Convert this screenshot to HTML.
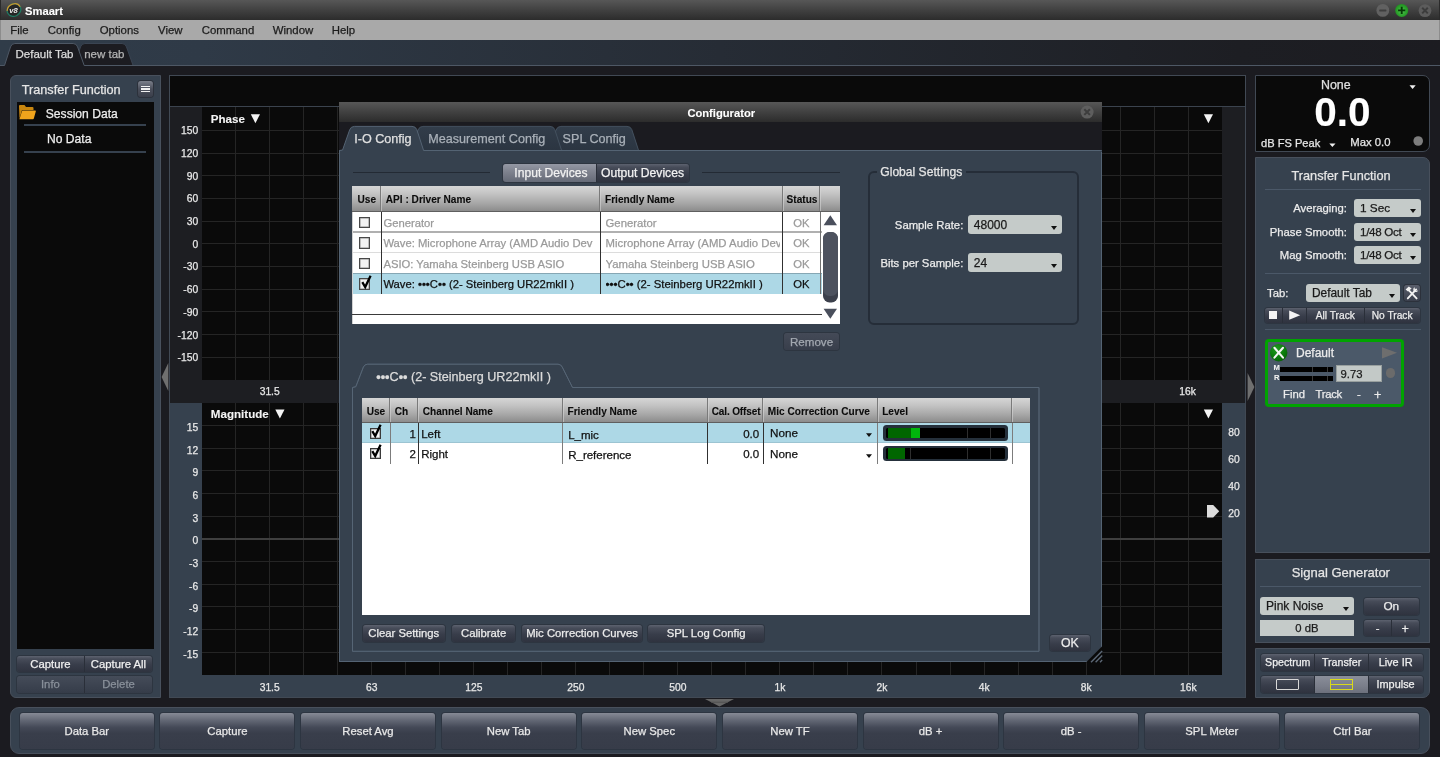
<!DOCTYPE html>
<html lang="en"><head><meta charset="utf-8"><title>Smaart</title>
<style>*{box-sizing:border-box;margin:0;padding:0}
html,body{width:1440px;height:757px;overflow:hidden;background:#1b1b20}
body{position:relative;font-family:"Liberation Sans",sans-serif;font-size:11.3px;color:#e4e4e4}
#root{left:0;top:0;width:1440px;height:757px;overflow:hidden;will-change:transform}
div,svg{position:absolute}
.t{white-space:pre;line-height:1;-webkit-text-stroke:0.25px}
.btn,.big,.dd{display:flex;align-items:center;white-space:pre;line-height:1}
.btn{background:linear-gradient(#5d626f 0%,#474c59 18%,#383d4a 55%,#2f333f 100%);
 border-radius:3px;box-shadow:0 0 0 1px rgba(38,43,53,.55)}
.big{background:linear-gradient(#868a95 0%,#636875 20%,#444957 40%,#393e4b 56%,#373c49 100%);
 border-radius:3px;box-shadow:0 0 0 1px rgba(40,45,56,.6)}
.dd{background:#c5cbc9;border-radius:3px}
.dd:after{content:"";position:absolute;right:5px;top:56%;border-left:3px solid transparent;border-right:3px solid transparent;border-top:4.2px solid #111}
.panel{background:#36414e;border:1px solid #48505c}
</style></head>
<body><div id="root">
<div style="left:0px;top:0px;width:1440px;height:20px;background:linear-gradient(#575757,#434343 45%,#2c2c2c)"></div>
<div style="left:0px;top:0px;width:1px;height:20px;background:#2a2a2a"></div>
<div style="left:1439px;top:0px;width:1px;height:20px;background:#2a2a2a"></div>
<svg style="left:6px;top:2px" width="16" height="16" viewBox="0 0 16 16"><g transform="rotate(-28 8 8)"><ellipse cx="8" cy="8" rx="7" ry="6.2" fill="#262626" stroke="#1f7a62" stroke-width="1.3"/><path d="M1.6 5.6A7 6.2 0 0 1 15 8" fill="none" stroke="#c9962e" stroke-width="1.3"/></g><text x="7.6" y="10.8" font-size="7.6" font-weight="bold" font-style="italic" fill="#ececec" text-anchor="middle" font-family="Liberation Sans, sans-serif">v8</text></svg>
<div class="t" style="left:25px;top:6px;width:60px;font-size:11.2px;color:#ffffff;font-weight:bold;-webkit-text-stroke:.1px;">Smaart</div>
<svg style="left:1374px;top:2px" width="62" height="17" viewBox="0 0 62 17"><defs><radialGradient id="gp" cx="50%" cy="55%" r="60%"><stop offset="0" stop-color="#55c055"/><stop offset="0.55" stop-color="#2ea52e"/><stop offset="1" stop-color="#1d8a1d"/></radialGradient></defs><circle cx="8.8" cy="8.4" r="6.4" fill="#616161"/><rect x="5.2" y="7.5" width="7.2" height="1.9" rx=".6" fill="#3e3e3e"/><circle cx="27.7" cy="8.4" r="6.5" fill="url(#gp)"/><path d="M24.1 8.4h7.2M27.7 4.8v7.2" stroke="#063a06" stroke-width="1.9"/><circle cx="51" cy="8.6" r="6.4" fill="#5c5c5c"/><path d="M48.2 5.8l5.6 5.6M53.8 5.8l-5.6 5.6" stroke="#3c3c3c" stroke-width="2"/></svg>
<div style="left:0px;top:20px;width:1440px;height:19.5px;background:#a9a9a9;border-left:1px solid #8c8c8c;border-right:1px solid #8c8c8c"></div>
<div class="t" style="left:10.3px;top:25px;width:80px;font-size:11.4px;color:#1c1c1c;">File</div>
<div class="t" style="left:47.8px;top:25px;width:80px;font-size:11.4px;color:#1c1c1c;">Config</div>
<div class="t" style="left:99.7px;top:25px;width:80px;font-size:11.4px;color:#1c1c1c;">Options</div>
<div class="t" style="left:158px;top:25px;width:80px;font-size:11.4px;color:#1c1c1c;">View</div>
<div class="t" style="left:201.7px;top:25px;width:80px;font-size:11.4px;color:#1c1c1c;">Command</div>
<div class="t" style="left:272.7px;top:25px;width:80px;font-size:11.4px;color:#1c1c1c;">Window</div>
<div class="t" style="left:331.7px;top:25px;width:80px;font-size:11.4px;color:#1c1c1c;">Help</div>
<div style="left:0px;top:39.5px;width:1440px;height:26px;background:linear-gradient(90deg,#303c49 0%,#2f3a47 14%,#1d1e23 86%,#1c1c21 100%)"></div>
<svg style="left:0;top:39px" width="1440" height="28" viewBox="0 0 1440 28"><path d="M74.5 26.5 L80.5 7.9 Q81.6 4.5 84.9 4.5 L122.1 4.5 Q125.4 4.5 126.5 7.9 L133.1 26.5 Z" fill="#1c1c21" stroke="#3a4452" stroke-width="1"/><path d="M0 26.5 L4.5 26.5 L10.5 7.9 Q11.6 4.5 14.9 4.5 L73.19999999999999 4.5 Q76.5 4.5 77.6 7.9 L84.19999999999999 26.5 L1440 26.5 L1440 28 L0 28 Z" fill="#1b1b20"/><path d="M0 26.5 L4.5 26.5 L10.5 7.9 Q11.6 4.5 14.9 4.5 L73.19999999999999 4.5 Q76.5 4.5 77.6 7.9 L84.19999999999999 26.5 L1440 26.5" fill="none" stroke="#4e5865" stroke-width="1"/></svg>
<div class="t" style="left:15.5px;top:49px;width:60px;font-size:11.5px;color:#dcdcdc;">Default Tab</div>
<div class="t" style="left:84.2px;top:49px;width:60px;font-size:11.5px;color:#b4b4b4;">new tab</div>
<div class="panel" style="left:10px;top:75px;width:151px;height:623px;border-radius:6px 0 0 6px"></div>
<div class="t" style="left:21.7px;top:84px;width:110px;font-size:12.7px;color:#e6e6e6;">Transfer Function</div>
<div style="left:138px;top:81px;width:15px;height:16px;background:linear-gradient(#7b7f8a,#4b4f5b 50%,#3a3e4a);border-radius:3px;box-shadow:0 0 0 1px #2c313b"></div>
<div style="left:141px;top:85.6px;width:9px;height:1.3px;background:#f0f0f0"></div>
<div style="left:141px;top:88.3px;width:9px;height:1.3px;background:#f0f0f0"></div>
<div style="left:141px;top:91.0px;width:9px;height:1.3px;background:#f0f0f0"></div>
<div style="left:16.7px;top:101.7px;width:137px;height:547.6px;background:#0a0a0a"></div>
<svg style="left:18px;top:104px" width="19" height="17" viewBox="0 0 19 17"><path d="M1 2 Q1 1 2 1 L6.5 1 L8 3 L14.5 3 Q15.5 3 15.5 4 L15.5 6 L4 6 L1.5 14.5 Z" fill="#c8860f"/><path d="M4.2 6.6 L17.3 6.6 Q18 6.6 17.8 7.4 L15.8 14.6 Q15.6 15.2 15 15.2 L1.4 15.2 Z" fill="#f0a41c"/></svg>
<div class="t" style="left:45.8px;top:108px;width:100px;font-size:12.1px;color:#eeeeee;">Session Data</div>
<div style="left:24px;top:124px;width:122px;height:2px;background:#36414e"></div>
<div class="t" style="left:47px;top:133px;width:100px;font-size:12.1px;color:#eeeeee;">No Data</div>
<div style="left:24px;top:151px;width:122px;height:2px;background:#36414e"></div>
<div class="btn" style="left:16.8px;top:655.8px;width:135.2px;height:16.2px;"></div>
<div style="left:84px;top:655.8px;width:1px;height:16.2px;background:#2a2f39"></div>
<div class="t" style="left:16.8px;top:659px;width:67.2px;font-size:11.3px;color:#f0f0f0;text-align:center;">Capture</div>
<div class="t" style="left:85px;top:659px;width:67px;font-size:11.3px;color:#f0f0f0;text-align:center;">Capture All</div>
<div class="btn" style="left:16.8px;top:676.2px;width:135.2px;height:16.4px;background:linear-gradient(#454c59,#353c49)"></div>
<div style="left:84px;top:676.2px;width:1px;height:16.4px;background:#2a2f39"></div>
<div class="t" style="left:16.8px;top:679px;width:67.2px;font-size:11.3px;color:#8a919b;text-align:center;">Info</div>
<div class="t" style="left:85px;top:679px;width:67px;font-size:11.3px;color:#8a919b;text-align:center;">Delete</div>
<svg style="left:161px;top:362px" width="8" height="30" viewBox="0 0 8 30"><path d="M7.3 1 L7.3 29 L0.6 15 Z" fill="#6f6f6f"/></svg>
<div style="left:169.4px;top:75px;width:1076.6px;height:623px;background:#1d1e22;border:1px solid #414954"></div>
<div style="left:170.4px;top:76px;width:1074.6px;height:29.6px;background:#0a0a0a"></div>
<div style="left:170.4px;top:105.6px;width:1074.6px;height:1px;background:#3b434e"></div>
<div style="left:170.4px;top:403px;width:1074.6px;height:294px;background:#36414e"></div>
<div style="left:202px;top:107px;width:1020px;height:273px;background:#0a0a0a"></div>
<div style="left:202px;top:403px;width:1020px;height:272px;background:#0a0a0a"></div>
<svg style="left:0;top:0" width="1440" height="757" viewBox="0 0 1440 757" shape-rendering="auto"><g stroke="#252525" stroke-width="1" shape-rendering="crispEdges"><path d="M235.5 107V380M235.5 403V675"/><path d="M269.5 107V380M269.5 403V675"/><path d="M303.5 107V380M303.5 403V675"/><path d="M337.5 107V380M337.5 403V675"/><path d="M371.5 107V380M371.5 403V675"/><path d="M405.5 107V380M405.5 403V675"/><path d="M439.5 107V380M439.5 403V675"/><path d="M473.5 107V380M473.5 403V675"/><path d="M507.5 107V380M507.5 403V675"/><path d="M541.5 107V380M541.5 403V675"/><path d="M575.5 107V380M575.5 403V675"/><path d="M609.5 107V380M609.5 403V675"/><path d="M643.5 107V380M643.5 403V675"/><path d="M677.5 107V380M677.5 403V675"/><path d="M711.5 107V380M711.5 403V675"/><path d="M745.5 107V380M745.5 403V675"/><path d="M779.5 107V380M779.5 403V675"/><path d="M813.5 107V380M813.5 403V675"/><path d="M847.5 107V380M847.5 403V675"/><path d="M881.5 107V380M881.5 403V675"/><path d="M916.5 107V380M916.5 403V675"/><path d="M950.5 107V380M950.5 403V675"/><path d="M984.5 107V380M984.5 403V675"/><path d="M1018.5 107V380M1018.5 403V675"/><path d="M1052.5 107V380M1052.5 403V675"/><path d="M1086.5 107V380M1086.5 403V675"/><path d="M1120.5 107V380M1120.5 403V675"/><path d="M1154.5 107V380M1154.5 403V675"/><path d="M1188.5 107V380M1188.5 403V675"/><path d="M202 130.5H1222"/><path d="M202 153.5H1222"/><path d="M202 175.5H1222"/><path d="M202 198.5H1222"/><path d="M202 221.5H1222"/><path d="M202 243.5H1222"/><path d="M202 266.5H1222"/><path d="M202 289.5H1222"/><path d="M202 311.5H1222"/><path d="M202 334.5H1222"/><path d="M202 357.5H1222"/><path d="M202 425.5H1222"/><path d="M202 448.5H1222"/><path d="M202 470.5H1222"/><path d="M202 493.5H1222"/><path d="M202 516.5H1222"/><path d="M202 561.5H1222"/><path d="M202 584.5H1222"/><path d="M202 606.5H1222"/><path d="M202 629.5H1222"/><path d="M202 652.5H1222"/></g><path d="M202 539H1222" stroke="#3f3f3f" stroke-width="1.9"/><path d="M250.8 114.2h9.2l-4.6 9.1z" fill="#f4f4f4"/><path d="M1203.8 114.2h9.2l-4.6 9.1z" fill="#f4f4f4"/><path d="M275.3 409.4h9.2l-4.6 9.1z" fill="#f4f4f4"/><path d="M1203.8 409.4h9.2l-4.6 9.1z" fill="#f4f4f4"/><path d="M1207 505h6.2l6 6.3l-6 6.3h-6.2z" fill="#dcdcdc"/><path d="M705 699h29l-14.5 7.4z" fill="#666666"/><path d="M711 702.2h17" stroke="#505050" stroke-width="1"/></svg>
<div class="t" style="left:170px;top:126px;width:28.2px;font-size:10.3px;color:#e8e8e8;text-align:right;">150</div>
<div class="t" style="left:170px;top:149px;width:28.2px;font-size:10.3px;color:#e8e8e8;text-align:right;">120</div>
<div class="t" style="left:170px;top:172px;width:28.2px;font-size:10.3px;color:#e8e8e8;text-align:right;">90</div>
<div class="t" style="left:170px;top:194px;width:28.2px;font-size:10.3px;color:#e8e8e8;text-align:right;">60</div>
<div class="t" style="left:170px;top:217px;width:28.2px;font-size:10.3px;color:#e8e8e8;text-align:right;">30</div>
<div class="t" style="left:170px;top:240px;width:28.2px;font-size:10.3px;color:#e8e8e8;text-align:right;">0</div>
<div class="t" style="left:170px;top:262px;width:28.2px;font-size:10.3px;color:#e8e8e8;text-align:right;">-30</div>
<div class="t" style="left:170px;top:285px;width:28.2px;font-size:10.3px;color:#e8e8e8;text-align:right;">-60</div>
<div class="t" style="left:170px;top:308px;width:28.2px;font-size:10.3px;color:#e8e8e8;text-align:right;">-90</div>
<div class="t" style="left:170px;top:331px;width:28.2px;font-size:10.3px;color:#e8e8e8;text-align:right;">-120</div>
<div class="t" style="left:170px;top:353px;width:28.2px;font-size:10.3px;color:#e8e8e8;text-align:right;">-150</div>
<div class="t" style="left:170px;top:423px;width:28.2px;font-size:10.3px;color:#e8e8e8;text-align:right;">15</div>
<div class="t" style="left:170px;top:446px;width:28.2px;font-size:10.3px;color:#e8e8e8;text-align:right;">12</div>
<div class="t" style="left:170px;top:468px;width:28.2px;font-size:10.3px;color:#e8e8e8;text-align:right;">9</div>
<div class="t" style="left:170px;top:491px;width:28.2px;font-size:10.3px;color:#e8e8e8;text-align:right;">6</div>
<div class="t" style="left:170px;top:514px;width:28.2px;font-size:10.3px;color:#e8e8e8;text-align:right;">3</div>
<div class="t" style="left:170px;top:536px;width:28.2px;font-size:10.3px;color:#e8e8e8;text-align:right;">0</div>
<div class="t" style="left:170px;top:559px;width:28.2px;font-size:10.3px;color:#e8e8e8;text-align:right;">-3</div>
<div class="t" style="left:170px;top:582px;width:28.2px;font-size:10.3px;color:#e8e8e8;text-align:right;">-6</div>
<div class="t" style="left:170px;top:604px;width:28.2px;font-size:10.3px;color:#e8e8e8;text-align:right;">-9</div>
<div class="t" style="left:170px;top:627px;width:28.2px;font-size:10.3px;color:#e8e8e8;text-align:right;">-12</div>
<div class="t" style="left:170px;top:650px;width:28.2px;font-size:10.3px;color:#e8e8e8;text-align:right;">-15</div>
<div class="t" style="left:1222px;top:428px;width:24px;font-size:10.3px;color:#e8e8e8;text-align:center;">80</div>
<div class="t" style="left:1222px;top:455px;width:24px;font-size:10.3px;color:#e8e8e8;text-align:center;">60</div>
<div class="t" style="left:1222px;top:482px;width:24px;font-size:10.3px;color:#e8e8e8;text-align:center;">40</div>
<div class="t" style="left:1222px;top:509px;width:24px;font-size:10.3px;color:#e8e8e8;text-align:center;">20</div>
<div class="t" style="left:249.7px;top:387px;width:40px;font-size:10.3px;color:#e8e8e8;text-align:center;">31.5</div>
<div class="t" style="left:1167.5px;top:387px;width:40px;font-size:10.3px;color:#e8e8e8;text-align:center;">16k</div>
<div class="t" style="left:249.7px;top:683px;width:40px;font-size:10.3px;color:#e8e8e8;text-align:center;">31.5</div>
<div class="t" style="left:351.76px;top:683px;width:40px;font-size:10.3px;color:#e8e8e8;text-align:center;">63</div>
<div class="t" style="left:453.82px;top:683px;width:40px;font-size:10.3px;color:#e8e8e8;text-align:center;">125</div>
<div class="t" style="left:555.88px;top:683px;width:40px;font-size:10.3px;color:#e8e8e8;text-align:center;">250</div>
<div class="t" style="left:657.94px;top:683px;width:40px;font-size:10.3px;color:#e8e8e8;text-align:center;">500</div>
<div class="t" style="left:760.0px;top:683px;width:40px;font-size:10.3px;color:#e8e8e8;text-align:center;">1k</div>
<div class="t" style="left:862.06px;top:683px;width:40px;font-size:10.3px;color:#e8e8e8;text-align:center;">2k</div>
<div class="t" style="left:964.1200000000001px;top:683px;width:40px;font-size:10.3px;color:#e8e8e8;text-align:center;">4k</div>
<div class="t" style="left:1066.18px;top:683px;width:40px;font-size:10.3px;color:#e8e8e8;text-align:center;">8k</div>
<div class="t" style="left:1168.24px;top:683px;width:40px;font-size:10.3px;color:#e8e8e8;text-align:center;">16k</div>
<div class="t" style="left:210.8px;top:113px;width:60px;font-size:11.6px;color:#f4f4f4;font-weight:bold;-webkit-text-stroke:.1px;">Phase</div>
<div class="t" style="left:210.8px;top:408px;width:70px;font-size:11.6px;color:#f4f4f4;font-weight:bold;-webkit-text-stroke:.1px;">Magnitude</div>
<div style="left:1255.3px;top:75.2px;width:175px;height:76.6px;background:#0a0a0a;border:1px solid #414954;border-radius:0 7px 7px 0"></div>
<div class="t" style="left:1256.3px;top:79px;width:159px;font-size:12.4px;color:#e0e0e0;text-align:center;">None</div>
<div class="t" style="left:1255.3px;top:92px;width:174px;font-size:40.5px;color:#ffffff;text-align:center;font-weight:bold;-webkit-text-stroke:.1px;">0.0</div>
<div class="t" style="left:1261px;top:138px;width:80px;font-size:11.1px;color:#e6e6e6;">dB FS Peak</div>
<div class="t" style="left:1350.3px;top:137px;width:60px;font-size:11.3px;color:#e6e6e6;">Max 0.0</div>
<svg style="left:1255px;top:75px" width="176" height="78" viewBox="0 0 176 78"><path d="M154.5 10.3h6.2l-3.1 3.6z" fill="#f0f0f0"/><path d="M74.3 68.5h6.2l-3.1 3.6z" fill="#f0f0f0"/><circle cx="163.2" cy="66" r="4.8" fill="#7d7d7d"/></svg>
<div class="panel" style="left:1255.3px;top:156.8px;width:175px;height:396.6px;border-radius:0 7px 0 0"></div>
<div class="t" style="left:1255.3px;top:170px;width:171.5px;font-size:12.7px;color:#e6e6e6;text-align:center;">Transfer Function</div>
<div style="left:1265px;top:189px;width:155.5px;height:1px;background:#4b5868"></div>
<div class="t" style="left:1247px;top:203px;width:100px;font-size:11.3px;color:#ececec;text-align:right;">Averaging:</div>
<div class="dd" style="left:1353.7px;top:199px;width:67.6px;height:18.3px;"></div>
<div class="t" style="left:1360.0px;top:203px;width:61.3px;font-size:11.8px;color:#1a1a1a;">1 Sec</div>
<div class="t" style="left:1247px;top:227px;width:100px;font-size:11.3px;color:#ececec;text-align:right;">Phase Smooth:</div>
<div class="dd" style="left:1353.7px;top:222.7px;width:67.6px;height:18.3px;"></div>
<div class="t" style="left:1360.0px;top:226px;width:61.3px;font-size:11.6px;color:#1a1a1a;letter-spacing:-.3px;">1/48 Oct</div>
<div class="t" style="left:1247px;top:250px;width:100px;font-size:11.3px;color:#ececec;text-align:right;">Mag Smooth:</div>
<div class="dd" style="left:1353.7px;top:246px;width:67.6px;height:18.3px;"></div>
<div class="t" style="left:1360.0px;top:249px;width:61.3px;font-size:11.6px;color:#1a1a1a;letter-spacing:-.3px;">1/48 Oct</div>
<div style="left:1265px;top:273.2px;width:155.5px;height:1px;background:#4b5868"></div>
<div class="t" style="left:1267px;top:288px;width:40px;font-size:11.3px;color:#ececec;">Tab:</div>
<div class="dd" style="left:1306px;top:283.5px;width:93.5px;height:18.3px;"></div>
<div class="t" style="left:1312px;top:288px;width:87.5px;font-size:11.9px;color:#1a1a1a;">Default Tab</div>
<div style="left:1404px;top:284.5px;width:16.3px;height:16.5px;background:linear-gradient(#5a5f6c,#3a3f4c);border-radius:3px;box-shadow:0 0 0 1px #2c313b"></div>
<svg style="left:1404px;top:284.5px" width="16.3" height="16.5" viewBox="0 0 16.3 16.5"><g stroke="#f2f2f2" stroke-width="1.9" stroke-linecap="round" fill="none"><path d="M4.2 4.6L12.6 13.4"/><path d="M12.2 4.4L3.8 13.4"/></g><path d="M1.6 4.4L4.8 1.6L7.6 3.6L4 6.6Z" fill="#f2f2f2"/><path d="M10.6 2.2a2.6 2.6 0 1 0 3.6 3.4l-1.9 .2l-1.4-1.4z" fill="#f2f2f2"/></svg>
<div class="btn" style="left:1265px;top:307.7px;width:155.3px;height:15.2px;"></div>
<div style="left:1282.0px;top:307.7px;width:1px;height:15.2px;background:#2a2f39"></div>
<div style="left:1306.2px;top:307.7px;width:1px;height:15.2px;background:#2a2f39"></div>
<div style="left:1363.5px;top:307.7px;width:1px;height:15.2px;background:#2a2f39"></div>
<div style="left:1269px;top:311px;width:8px;height:8px;background:#f4f4f4"></div>
<svg style="left:1287px;top:309px" width="16" height="13" viewBox="0 0 16 13"><path d="M2.2 1.6L13.2 6.2L2.2 10.8Z" fill="#f4f4f4"/></svg>
<div class="t" style="left:1306.7px;top:311px;width:57.3px;font-size:10.2px;color:#ececec;text-align:center;">All Track</div>
<div class="t" style="left:1364px;top:311px;width:56.3px;font-size:10.2px;color:#ececec;text-align:center;">No Track</div>
<div style="left:1265px;top:329px;width:155.5px;height:1px;background:#4b5868"></div>
<div style="left:1265px;top:338.8px;width:139px;height:68px;background:#4b5969;border:3px solid #00a300;border-radius:4px"></div>
<svg style="left:1269px;top:343px" width="20" height="20" viewBox="0 0 20 20"><defs><radialGradient id="gx" cx="40%" cy="30%" r="75%"><stop offset="0" stop-color="#1f9a1f"/><stop offset="0.6" stop-color="#0b7d0b"/><stop offset="1" stop-color="#075f07"/></radialGradient></defs><circle cx="9.7" cy="9.7" r="8.7" fill="url(#gx)"/><path d="M5.4 4.8L14 14.6M14 4.8L5.4 14.6" stroke="#f4f4f4" stroke-width="2.1" stroke-linecap="round"/></svg>
<div class="t" style="left:1296px;top:347px;width:60px;font-size:12px;color:#ececec;">Default</div>
<svg style="left:1381px;top:346px" width="18" height="14" viewBox="0 0 18 14"><path d="M1 1.2L16 6.8L1 12.4Z" fill="#6e6e6e"/></svg>
<div class="t" style="left:1273.6px;top:364px;width:8px;font-size:7.6px;color:#f0f0f0;font-weight:bold;-webkit-text-stroke:.1px;">M</div>
<div class="t" style="left:1273.9px;top:374px;width:8px;font-size:7.6px;color:#f0f0f0;font-weight:bold;-webkit-text-stroke:.1px;">R</div>
<div style="left:1280px;top:366.8px;width:53px;height:5.2px;background:#000"></div>
<div style="left:1280px;top:376px;width:53px;height:5.2px;background:#000"></div>
<div style="left:1311.5px;top:366.8px;width:1px;height:5.2px;background:#3a3a3a"></div>
<div style="left:1311.5px;top:376px;width:1px;height:5.2px;background:#3a3a3a"></div>
<div style="left:1326.5px;top:366.8px;width:1px;height:5.2px;background:#3a3a3a"></div>
<div style="left:1326.5px;top:376px;width:1px;height:5.2px;background:#3a3a3a"></div>
<div style="left:1335.8px;top:365.2px;width:46px;height:16.6px;background:#c3c9c7;border:1.3px solid #99a09f"></div>
<div class="t" style="left:1340.5px;top:369px;width:40px;font-size:11.3px;color:#1c1c1c;">9.73</div>
<div style="left:1385.5px;top:368.2px;width:9.6px;height:9.6px;background:#6b6b6b;border-radius:50%"></div>
<div class="t" style="left:1283px;top:389px;width:30px;font-size:11.3px;color:#ececec;">Find</div>
<div class="t" style="left:1315.5px;top:389px;width:30px;font-size:11.3px;color:#ececec;letter-spacing:-.3px;">Track</div>
<div class="t" style="left:1357px;top:389px;width:10px;font-size:11.3px;color:#ececec;">-</div>
<div class="t" style="left:1374px;top:389px;width:10px;font-size:12.5px;color:#ececec;">+</div>
<div class="panel" style="left:1255.3px;top:559.2px;width:175px;height:84.3px;"></div>
<div class="t" style="left:1255.3px;top:566px;width:171px;font-size:13px;color:#e6e6e6;text-align:center;">Signal Generator</div>
<div style="left:1260px;top:586px;width:160.5px;height:1px;background:#4b5868"></div>
<div class="dd" style="left:1260px;top:596.7px;width:93.8px;height:18.6px;"></div>
<div class="t" style="left:1266px;top:600px;width:87.8px;font-size:12px;color:#1a1a1a;">Pink Noise</div>
<div class="btn" style="left:1363.8px;top:598px;width:55px;height:16.5px;"></div>
<div class="t" style="left:1363.8px;top:601px;width:55px;font-size:11.8px;color:#ececec;text-align:center;">On</div>
<div style="left:1260px;top:620.3px;width:93.8px;height:16px;background:#c5cbc9"></div>
<div class="t" style="left:1260px;top:623px;width:93.8px;font-size:11.3px;color:#1c1c1c;text-align:center;">0 dB</div>
<div class="btn" style="left:1363.8px;top:620px;width:55px;height:16.3px;"></div>
<div style="left:1391px;top:620px;width:1px;height:16.3px;background:#2a2f39"></div>
<div class="t" style="left:1363.8px;top:623px;width:27.5px;font-size:11.3px;color:#ececec;text-align:center;">-</div>
<div class="t" style="left:1391.5px;top:623px;width:27.5px;font-size:12.5px;color:#ececec;text-align:center;">+</div>
<div class="panel" style="left:1255.3px;top:648px;width:175px;height:50px;border-radius:0 0 7px 0"></div>
<div class="btn" style="left:1261px;top:653.5px;width:161.5px;height:17px;"></div>
<div class="btn" style="left:1261px;top:676px;width:161.5px;height:17px;"></div>
<div style="left:1314.5px;top:676px;width:54.2px;height:17px;background:linear-gradient(#8a8e99,#7a7e8a 60%,#6c707c)"></div>
<div style="left:1314.0px;top:653.5px;width:1px;height:17px;background:#2a2f39"></div>
<div style="left:1314.0px;top:676px;width:1px;height:17px;background:#2a2f39"></div>
<div style="left:1368.2px;top:653.5px;width:1px;height:17px;background:#2a2f39"></div>
<div style="left:1368.2px;top:676px;width:1px;height:17px;background:#2a2f39"></div>
<div class="t" style="left:1261px;top:657px;width:53.5px;font-size:10.6px;color:#f0f0f0;text-align:center;">Spectrum</div>
<div class="t" style="left:1314.5px;top:657px;width:54.2px;font-size:10.7px;color:#f0f0f0;text-align:center;">Transfer</div>
<div class="t" style="left:1368.7px;top:657px;width:53.8px;font-size:10.9px;color:#f0f0f0;text-align:center;">Live IR</div>
<div class="t" style="left:1368.7px;top:679px;width:53.8px;font-size:10.9px;color:#f0f0f0;text-align:center;">Impulse</div>
<div style="left:1275.5px;top:679.3px;width:23.6px;height:10.6px;border:1.3px solid #d8d8d8;border-radius:1px"></div>
<div style="left:1329.8px;top:679.3px;width:23.4px;height:10.6px;border:1.2px solid #d9d91a"></div>
<div style="left:1329.8px;top:684px;width:23.4px;height:1.2px;background:#d9d91a"></div>
<svg style="left:1247px;top:372px" width="8" height="30" viewBox="0 0 8 30"><path d="M0.6 1L0.6 29L7.4 15Z" fill="#6f6f6f"/></svg>
<div class="panel" style="left:10px;top:707.3px;width:1420px;height:46.7px;border-radius:9px"></div>
<div class="big" style="left:19.8px;top:712.8px;width:134px;height:36.2px;"></div>
<div class="t" style="left:19.8px;top:726px;width:134px;font-size:11.3px;color:#e8e8e8;text-align:center;">Data Bar</div>
<div class="big" style="left:160.4px;top:712.8px;width:134px;height:36.2px;"></div>
<div class="t" style="left:160.4px;top:726px;width:134px;font-size:11.3px;color:#e8e8e8;text-align:center;">Capture</div>
<div class="big" style="left:301.0px;top:712.8px;width:134px;height:36.2px;"></div>
<div class="t" style="left:301.0px;top:726px;width:134px;font-size:11.3px;color:#e8e8e8;text-align:center;">Reset Avg</div>
<div class="big" style="left:441.7px;top:712.8px;width:134px;height:36.2px;"></div>
<div class="t" style="left:441.7px;top:726px;width:134px;font-size:11.3px;color:#e8e8e8;text-align:center;">New Tab</div>
<div class="big" style="left:582.3px;top:712.8px;width:134px;height:36.2px;"></div>
<div class="t" style="left:582.3px;top:726px;width:134px;font-size:11.3px;color:#e8e8e8;text-align:center;">New Spec</div>
<div class="big" style="left:722.9px;top:712.8px;width:134px;height:36.2px;"></div>
<div class="t" style="left:722.9px;top:726px;width:134px;font-size:11.3px;color:#e8e8e8;text-align:center;">New TF</div>
<div class="big" style="left:863.5px;top:712.8px;width:134px;height:36.2px;"></div>
<div class="t" style="left:863.5px;top:726px;width:134px;font-size:11.3px;color:#e8e8e8;text-align:center;">dB +</div>
<div class="big" style="left:1004.1px;top:712.8px;width:134px;height:36.2px;"></div>
<div class="t" style="left:1004.1px;top:726px;width:134px;font-size:11.3px;color:#e8e8e8;text-align:center;">dB -</div>
<div class="big" style="left:1144.8px;top:712.8px;width:134px;height:36.2px;"></div>
<div class="t" style="left:1144.8px;top:726px;width:134px;font-size:11.3px;color:#e8e8e8;text-align:center;">SPL Meter</div>
<div class="big" style="left:1285.4px;top:712.8px;width:134px;height:36.2px;"></div>
<div class="t" style="left:1285.4px;top:726px;width:134px;font-size:11.3px;color:#e8e8e8;text-align:center;">Ctrl Bar</div>
<div style="left:339px;top:102px;width:763px;height:20.2px;background:linear-gradient(#575757,#434343 45%,#2c2c2c)"></div>
<div class="t" style="left:339px;top:108px;width:764.5px;font-size:11.2px;color:#ffffff;text-align:center;font-weight:bold;-webkit-text-stroke:.1px;">Configurator</div>
<svg style="left:1079px;top:104px" width="16" height="16" viewBox="0 0 16 16"><circle cx="8.1" cy="8.1" r="6.5" fill="#5e5e5e"/><path d="M5.3 5.3l5.6 5.6M10.9 5.3l-5.6 5.6" stroke="#3d3d3d" stroke-width="2"/></svg>
<div style="left:339px;top:122px;width:763px;height:28.5px;background:#1b1b20"></div>
<div style="left:339px;top:150px;width:763px;height:512px;background:#36414e;border:1px solid #546373"></div>
<svg style="left:339px;top:122px" width="763" height="30" viewBox="0 0 763 30"><defs><linearGradient id="tg" x1="0" y1="0" x2="0" y2="1"><stop offset="0" stop-color="#323d4a"/><stop offset="1" stop-color="#2b3541"/></linearGradient></defs><path d="M209.9 28.5 L217.1 8 Q218.3 4.4 221.9 4.4 L288 4.4 Q291.6 4.4 292.8 7.6 L299.6 28.5 Z" fill="url(#tg)" stroke="#43505e" stroke-width="1"/><path d="M71.9 28.5 L79.1 8 Q80.3 4.4 83.9 4.4 L211 4.4 Q214.6 4.4 215.8 7.6 L222.6 28.5 Z" fill="url(#tg)" stroke="#43505e" stroke-width="1"/><path d="M0.5 30 L0.5 28.5 L3.6 28 L10.6 8 Q11.8 4.4 15.4 4.4 L73 4.4 Q76.6 4.4 77.8 7.6 L84.6 28.5 L763 28.5 L763 30 Z" fill="#36414e"/><path d="M0.5 30 L0.5 28.5 L3.6 28 L10.6 8 Q11.8 4.4 15.4 4.4 L73 4.4 Q76.6 4.4 77.8 7.6 L84.6 28.5 L762.5 28.5" fill="none" stroke="#546373" stroke-width="1"/></svg>
<div class="t" style="left:354.2px;top:133px;width:70px;font-size:12.6px;color:#e0e0e0;">I-O Config</div>
<div class="t" style="left:428.3px;top:133px;width:130px;font-size:12.6px;color:#a9b0b8;">Measurement Config</div>
<div class="t" style="left:562.6px;top:133px;width:80px;font-size:12.6px;color:#a9b0b8;">SPL Config</div>
<div style="left:352.5px;top:171.5px;width:137.3px;height:1.4px;background:#232a34"></div>
<div style="left:702px;top:171.5px;width:138px;height:1.4px;background:#232a34"></div>
<div class="btn" style="left:503px;top:163.8px;width:186px;height:18px;"></div>
<div style="left:503px;top:163.8px;width:93px;height:18px;background:linear-gradient(#9498a4,#7d818d 45%,#656a77);border-radius:3px 0 0 3px"></div>
<div style="left:595.6px;top:163.8px;width:1px;height:18px;background:#2a2f39"></div>
<div class="t" style="left:504.5px;top:167px;width:93px;font-size:12.1px;color:#f2f2f2;text-align:center;">Input Devices</div>
<div class="t" style="left:596px;top:167px;width:93px;font-size:12.15px;color:#f2f2f2;text-align:center;">Output Devices</div>
<div style="left:352px;top:185.8px;width:488px;height:138px;background:#ffffff"></div>
<div style="left:352px;top:185.8px;width:488px;height:26px;background:linear-gradient(#d6d6d6 0%,#c4c4c4 30%,#a6a6a6 70%,#8c8c8c 100%);border-bottom:1px solid #5f5f5f"></div>
<div style="left:379.8px;top:186px;width:1px;height:25px;background:#7a7a7a"></div>
<div style="left:380.8px;top:186px;width:1px;height:25px;background:#d8d8d8;opacity:.55"></div>
<div style="left:599.3px;top:186px;width:1px;height:25px;background:#7a7a7a"></div>
<div style="left:600.3px;top:186px;width:1px;height:25px;background:#d8d8d8;opacity:.55"></div>
<div style="left:781.5px;top:186px;width:1px;height:25px;background:#7a7a7a"></div>
<div style="left:782.5px;top:186px;width:1px;height:25px;background:#d8d8d8;opacity:.55"></div>
<div style="left:819px;top:186px;width:1px;height:25px;background:#7a7a7a"></div>
<div style="left:820px;top:186px;width:1px;height:25px;background:#d8d8d8;opacity:.55"></div>
<div class="t" style="left:357.5px;top:195px;width:120px;font-size:10.1px;color:#0c0c0c;font-weight:bold;-webkit-text-stroke:.1px;">Use</div>
<div class="t" style="left:385.8px;top:195px;width:120px;font-size:10.1px;color:#0c0c0c;font-weight:bold;-webkit-text-stroke:.1px;">API : Driver Name</div>
<div class="t" style="left:605px;top:195px;width:120px;font-size:10.1px;color:#0c0c0c;font-weight:bold;-webkit-text-stroke:.1px;">Friendly Name</div>
<div class="t" style="left:786.6px;top:195px;width:120px;font-size:10.1px;color:#0c0c0c;font-weight:bold;-webkit-text-stroke:.1px;">Status</div>
<div style="left:352px;top:273.3px;width:470px;height:20.5px;background:#add8e6"></div>
<div style="left:352px;top:231px;width:470px;height:2px;background:#b0b0b0"></div>
<div style="left:352px;top:252px;width:470px;height:1px;background:#dcdcdc"></div>
<div style="left:352px;top:273px;width:470px;height:1px;background:#86a7b4"></div>
<div style="left:352px;top:211.8px;width:1px;height:112px;background:#d2d2d2"></div>
<div class="t" style="left:383.4px;top:218px;width:210.5px;font-size:11.26px;color:#9a9a9a;overflow:hidden">Generator</div>
<div class="t" style="left:605.5px;top:218px;width:174.9px;font-size:11.35px;color:#9a9a9a;overflow:hidden">Generator</div>
<div class="t" style="left:783px;top:218px;width:37px;font-size:11.26px;color:#9a9a9a;text-align:center;">OK</div>
<div style="left:359.2px;top:217.0px;width:11.3px;height:11.3px;background:#f2f2f2;border:1px solid #484848;box-shadow:inset 0 0 0 .5px #8a8a8a"></div>
<div class="t" style="left:383.4px;top:238px;width:210.5px;font-size:11.26px;color:#9a9a9a;overflow:hidden">Wave: Microphone Array (AMD Audio Dev</div>
<div class="t" style="left:605.5px;top:238px;width:174.9px;font-size:11.35px;color:#9a9a9a;overflow:hidden">Microphone Array (AMD Audio Device)</div>
<div class="t" style="left:783px;top:238px;width:37px;font-size:11.26px;color:#9a9a9a;text-align:center;">OK</div>
<div style="left:359.2px;top:237.25px;width:11.3px;height:11.3px;background:#f2f2f2;border:1px solid #484848;box-shadow:inset 0 0 0 .5px #8a8a8a"></div>
<div class="t" style="left:383.4px;top:259px;width:210.5px;font-size:11.26px;color:#9a9a9a;overflow:hidden">ASIO: Yamaha Steinberg USB ASIO</div>
<div class="t" style="left:605.5px;top:259px;width:174.9px;font-size:11.35px;color:#9a9a9a;overflow:hidden">Yamaha Steinberg USB ASIO</div>
<div class="t" style="left:783px;top:259px;width:37px;font-size:11.26px;color:#9a9a9a;text-align:center;">OK</div>
<div style="left:359.2px;top:257.8px;width:11.3px;height:11.3px;background:#f2f2f2;border:1px solid #484848;box-shadow:inset 0 0 0 .5px #8a8a8a"></div>
<div class="t" style="left:383.4px;top:279px;width:210.5px;font-size:11.26px;color:#111111;overflow:hidden">Wave: <b>•••</b>C<b>••</b> (2- Steinberg UR22mkII )</div>
<div class="t" style="left:605.5px;top:279px;width:174.9px;font-size:11.35px;color:#111111;overflow:hidden"><b>•••</b>C<b>••</b> (2- Steinberg UR22mkII )</div>
<div class="t" style="left:783px;top:279px;width:37px;font-size:11.26px;color:#111111;text-align:center;">OK</div>
<div style="left:359.2px;top:278.45000000000005px;width:11.3px;height:11.3px;background:#f2f2f2;border:1px solid #484848;box-shadow:inset 0 0 0 .5px #8a8a8a"></div>
<svg style="left:358.5px;top:273.55px" width="16" height="18" viewBox="0 0 16 18"><path d="M3.3 8.2L6.2 13L11.6 1.8" fill="none" stroke="#000" stroke-width="2.3" stroke-linejoin="miter"/></svg>
<div style="left:381px;top:211.8px;width:1px;height:82px;background:#303030"></div>
<div style="left:600px;top:211.8px;width:1px;height:82px;background:#303030"></div>
<div style="left:782px;top:211.8px;width:1px;height:82px;background:#303030"></div>
<div style="left:820px;top:211.8px;width:1px;height:82px;background:#707070"></div>
<div style="left:352px;top:314px;width:470px;height:1px;background:#3a3a3a"></div>
<svg style="left:821px;top:212px" width="19" height="112" viewBox="0 0 19 112"><path d="M2.6 13.2L16 13.2L9.3 3.2Z" fill="#4a4f5c"/><rect x="2" y="20" width="15" height="70.5" rx="6.5" fill="#3c404c"/><rect x="2" y="20" width="15" height="64" rx="6.5" fill="#4d525f"/><path d="M2.6 96.8L16 96.8L9.3 106.8Z" fill="#4a4f5c"/></svg>
<div class="btn" style="left:784px;top:333.3px;width:55px;height:17px;background:linear-gradient(#444a57,#383e4b)"></div>
<div class="t" style="left:784px;top:336px;width:55px;font-size:11.6px;color:#a4a9b1;text-align:center;">Remove</div>
<div style="left:867.5px;top:171.2px;width:211px;height:154.3px;border:2px solid #252d38;border-radius:6px"></div>
<div style="left:876.5px;top:170px;width:89.5px;height:5px;background:#36414e"></div>
<div class="t" style="left:880.3px;top:166px;width:100px;font-size:12.1px;color:#e6e6e6;">Global Settings</div>
<div class="t" style="left:863.3px;top:220px;width:100px;font-size:11.3px;color:#ececec;text-align:right;">Sample Rate:</div>
<div class="t" style="left:863.3px;top:258px;width:100px;font-size:11.3px;color:#ececec;text-align:right;">Bits per Sample:</div>
<div class="dd" style="left:968px;top:215.3px;width:94.2px;height:19.2px;"></div>
<div class="t" style="left:973.8px;top:219px;width:88.4px;font-size:12px;color:#1a1a1a;">48000</div>
<div class="dd" style="left:968px;top:253px;width:94.2px;height:19px;"></div>
<div class="t" style="left:973.8px;top:257px;width:88.4px;font-size:12px;color:#1a1a1a;">24</div>
<svg style="left:350px;top:360px" width="692" height="294" viewBox="0 0 692 294"><path d="M2.5 291.3 L2.5 27.5 L5.8 26.7 L13.4 7 Q14.6 4.2 17.6 4.2 L208 4.2 Q211 4.2 212.2 7 L222.5 27.5 L689 27.5 L689 291.3 Z" fill="none" stroke="#56657590" stroke-width="1"/><path d="M2.5 291.3 L2.5 27.5 L5.8 26.7 L13.4 7 Q14.6 4.2 17.6 4.2 L208 4.2 Q211 4.2 212.2 7 L222.5 27.5 L689 27.5 L689 291.3 Z" fill="none" stroke="#566575" stroke-width="1"/></svg>
<div class="t" style="left:376.3px;top:371px;width:180px;font-size:12.6px;color:#dcdcdc;"><b>•••</b>C<b>••</b> (2- Steinberg UR22mkII )</div>
<div style="left:361.5px;top:397.5px;width:668px;height:217px;background:#ffffff"></div>
<div style="left:361.5px;top:397.5px;width:668px;height:25.5px;background:linear-gradient(#d6d6d6 0%,#c4c4c4 30%,#a6a6a6 70%,#8c8c8c 100%);border-bottom:1px solid #5f5f5f"></div>
<div style="left:389px;top:397.7px;width:1px;height:24.5px;background:#7a7a7a"></div>
<div style="left:390px;top:397.7px;width:1px;height:24.5px;background:#d8d8d8;opacity:.55"></div>
<div style="left:417.3px;top:397.7px;width:1px;height:24.5px;background:#7a7a7a"></div>
<div style="left:418.3px;top:397.7px;width:1px;height:24.5px;background:#d8d8d8;opacity:.55"></div>
<div style="left:561.5px;top:397.7px;width:1px;height:24.5px;background:#7a7a7a"></div>
<div style="left:562.5px;top:397.7px;width:1px;height:24.5px;background:#d8d8d8;opacity:.55"></div>
<div style="left:706.5px;top:397.7px;width:1px;height:24.5px;background:#7a7a7a"></div>
<div style="left:707.5px;top:397.7px;width:1px;height:24.5px;background:#d8d8d8;opacity:.55"></div>
<div style="left:762.3px;top:397.7px;width:1px;height:24.5px;background:#7a7a7a"></div>
<div style="left:763.3px;top:397.7px;width:1px;height:24.5px;background:#d8d8d8;opacity:.55"></div>
<div style="left:876.5px;top:397.7px;width:1px;height:24.5px;background:#7a7a7a"></div>
<div style="left:877.5px;top:397.7px;width:1px;height:24.5px;background:#d8d8d8;opacity:.55"></div>
<div style="left:1011px;top:397.7px;width:1px;height:24.5px;background:#7a7a7a"></div>
<div style="left:1012px;top:397.7px;width:1px;height:24.5px;background:#d8d8d8;opacity:.55"></div>
<div class="t" style="left:366.7px;top:407px;width:120px;font-size:10.1px;color:#0c0c0c;font-weight:bold;-webkit-text-stroke:.1px;">Use</div>
<div class="t" style="left:394.7px;top:407px;width:120px;font-size:10.1px;color:#0c0c0c;font-weight:bold;-webkit-text-stroke:.1px;">Ch</div>
<div class="t" style="left:422.8px;top:407px;width:120px;font-size:10.1px;color:#0c0c0c;font-weight:bold;-webkit-text-stroke:.1px;">Channel Name</div>
<div class="t" style="left:567.5px;top:407px;width:120px;font-size:10.1px;color:#0c0c0c;font-weight:bold;-webkit-text-stroke:.1px;">Friendly Name</div>
<div class="t" style="left:711.7px;top:407px;width:120px;font-size:10px;color:#0c0c0c;font-weight:bold;-webkit-text-stroke:.1px;letter-spacing:-.12px;">Cal. Offset</div>
<div class="t" style="left:767.8px;top:407px;width:120px;font-size:10.1px;color:#0c0c0c;font-weight:bold;-webkit-text-stroke:.1px;">Mic Correction Curve</div>
<div class="t" style="left:882.2px;top:407px;width:120px;font-size:10.1px;color:#0c0c0c;font-weight:bold;-webkit-text-stroke:.1px;">Level</div>
<div style="left:361.5px;top:422.6px;width:668px;height:20.3px;background:#add8e6"></div>
<div style="left:361.5px;top:442.4px;width:668px;height:1px;background:#9cc4d2"></div>
<div style="left:390px;top:422.6px;width:1px;height:41px;background:#7c7c7c"></div>
<div style="left:418px;top:422.6px;width:1px;height:41px;background:#303030"></div>
<div style="left:562px;top:422.6px;width:1px;height:41px;background:#7c7c7c"></div>
<div style="left:707px;top:422.6px;width:1px;height:41px;background:#303030"></div>
<div style="left:763px;top:422.6px;width:1px;height:41px;background:#303030"></div>
<div style="left:877px;top:422.6px;width:1px;height:41px;background:#7c7c7c"></div>
<div style="left:1012px;top:422.6px;width:1px;height:41px;background:#7c7c7c"></div>
<div style="left:370px;top:428.0px;width:11.2px;height:11.2px;background:#f6f6f6;border:1px solid #3a3a3a;box-shadow:inset 0 0 0 .5px #808080"></div>
<svg style="left:369.3px;top:423.0px" width="16" height="18" viewBox="0 0 16 18"><path d="M3.3 8.2L6.2 13L11.6 1.8" fill="none" stroke="#000" stroke-width="2.3"/></svg>
<div class="t" style="left:391px;top:429px;width:24.8px;font-size:11.5px;color:#111;text-align:right;">1</div>
<div class="t" style="left:421.2px;top:429px;width:100px;font-size:11.5px;color:#111;">Left</div>
<div class="t" style="left:568.2px;top:430px;width:120px;font-size:11.5px;color:#111;">L_mic</div>
<div class="t" style="left:709px;top:429px;width:50.2px;font-size:11.5px;color:#111;text-align:right;">0.0</div>
<div class="t" style="left:770px;top:427px;width:60px;font-size:11.7px;color:#111;">None</div>
<svg style="left:865px;top:432.40000000000003px" width="8" height="6" viewBox="0 0 8 6"><path d="M1 1.2h6l-3 3.8z" fill="#111"/></svg>
<div style="left:883.2px;top:425.40000000000003px;width:124.6px;height:15.4px;background:#25303b;border-radius:3.5px"></div>
<div style="left:886px;top:427.70000000000005px;width:119.4px;height:10.8px;background:#000;border-radius:1.5px"></div>
<div style="left:910.1px;top:427.70000000000005px;width:1px;height:10.8px;background:#2e2e2e"></div>
<div style="left:967.0px;top:427.70000000000005px;width:1px;height:10.8px;background:#2e2e2e"></div>
<div style="left:989.8px;top:427.70000000000005px;width:1px;height:10.8px;background:#2e2e2e"></div>
<div style="left:887.5px;top:427.70000000000005px;width:23.3px;height:10.8px;background:#006600"></div>
<div style="left:910.8px;top:427.70000000000005px;width:9px;height:10.8px;background:#00b60c"></div>
<div style="left:370px;top:448.29999999999995px;width:11.2px;height:11.2px;background:#f6f6f6;border:1px solid #3a3a3a;box-shadow:inset 0 0 0 .5px #808080"></div>
<svg style="left:369.3px;top:443.29999999999995px" width="16" height="18" viewBox="0 0 16 18"><path d="M3.3 8.2L6.2 13L11.6 1.8" fill="none" stroke="#000" stroke-width="2.3"/></svg>
<div class="t" style="left:391px;top:449px;width:24.8px;font-size:11.5px;color:#111;text-align:right;">2</div>
<div class="t" style="left:421.2px;top:449px;width:100px;font-size:11.5px;color:#111;">Right</div>
<div class="t" style="left:568.2px;top:450px;width:120px;font-size:11.5px;color:#111;">R_reference</div>
<div class="t" style="left:709px;top:449px;width:50.2px;font-size:11.5px;color:#111;text-align:right;">0.0</div>
<div class="t" style="left:770px;top:448px;width:60px;font-size:11.7px;color:#111;">None</div>
<svg style="left:865px;top:452.7px" width="8" height="6" viewBox="0 0 8 6"><path d="M1 1.2h6l-3 3.8z" fill="#111"/></svg>
<div style="left:883.2px;top:445.7px;width:124.6px;height:15.4px;background:#25303b;border-radius:3.5px"></div>
<div style="left:886px;top:448.0px;width:119.4px;height:10.8px;background:#000;border-radius:1.5px"></div>
<div style="left:910.1px;top:448.0px;width:1px;height:10.8px;background:#2e2e2e"></div>
<div style="left:967.0px;top:448.0px;width:1px;height:10.8px;background:#2e2e2e"></div>
<div style="left:989.8px;top:448.0px;width:1px;height:10.8px;background:#2e2e2e"></div>
<div style="left:887.5px;top:448.0px;width:17.2px;height:10.8px;background:#006600"></div>
<div class="btn" style="left:362.5px;top:625px;width:82.5px;height:16.8px;"></div>
<div class="t" style="left:362.5px;top:628px;width:82.5px;font-size:11.3px;color:#ececec;text-align:center;">Clear Settings</div>
<div class="btn" style="left:451.7px;top:625px;width:63.80000000000001px;height:16.8px;"></div>
<div class="t" style="left:451.7px;top:628px;width:63.80000000000001px;font-size:11.3px;color:#ececec;text-align:center;">Calibrate</div>
<div class="btn" style="left:521.7px;top:625px;width:120.79999999999995px;height:16.8px;"></div>
<div class="t" style="left:521.7px;top:628px;width:120.79999999999995px;font-size:11.3px;color:#ececec;text-align:center;">Mic Correction Curves</div>
<div class="btn" style="left:648.3px;top:625px;width:115.70000000000005px;height:16.8px;"></div>
<div class="t" style="left:648.3px;top:628px;width:115.70000000000005px;font-size:11.3px;color:#ececec;text-align:center;">SPL Log Config</div>
<div class="btn" style="left:1049.5px;top:634.8px;width:40.8px;height:16.2px;"></div>
<div class="t" style="left:1049.5px;top:637px;width:40.8px;font-size:12.3px;color:#ececec;text-align:center;">OK</div>
<svg style="left:1085px;top:645px" width="18" height="18" viewBox="0 0 18 18"><path d="M1.2 17.2L17.2 1.2L17.2 17.2Z" fill="#0a0a0a"/><g stroke="#5d6977" stroke-width="1.4" fill="none"><path d="M6 17.2L17.2 6"/><path d="M10.6 17.2L17.2 10.6"/><path d="M15 17.2L17.2 15"/></g></svg>
</div></body></html>
